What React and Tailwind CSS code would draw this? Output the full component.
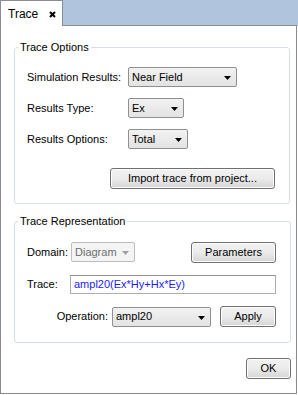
import React from "react";

function Arrow({ disabled }) {
  return (
    <svg width="7" height="4" viewBox="0 0 7 4" className="mt-[2px] shrink-0">
      <path d="M0 0 L7 0 L3.5 4 Z" fill={disabled ? "#a0a0a0" : "#000"} />
    </svg>
  );
}

function Combo({ className, text, disabled }) {
  return (
    <div
      className={
        "flex h-[20px] items-center justify-between rounded-[2px] border pl-[3px] pr-[5px] " +
        (disabled
          ? "border-[#b9bdc0] bg-[#f4f4f4] text-[#6d6d6d] "
          : "border-[#8e8f8f] bg-gradient-to-b from-[#f2f2f2] to-[#e3e3e3] text-black ") +
        className
      }
    >
      <span className="leading-[13px]">{text}</span>
      <Arrow disabled={disabled} />
    </div>
  );
}

function Button({ className, children }) {
  return (
    <div
      className={
        "flex h-[21px] items-center justify-center rounded-[3px] border border-[#707070] bg-gradient-to-b from-[#f2f2f2] via-[#ebebeb] to-[#d5d5d5] text-black shadow-[inset_0_0_0_1px_#fcfcfc] " +
        className
      }
    >
      <span className="leading-[13px]">{children}</span>
    </div>
  );
}

export default function App() {
  return (
    <div className="h-[395px] w-[298px] bg-white font-['Liberation_Sans',Arial,sans-serif] text-[11px] text-black">
      {/* tab bar */}
      <div className="flex h-[26px] w-[298px] bg-[#b0c4de]">
        <div className="flex h-[26px] w-[63px] items-center border-l border-r border-t border-[#898c95] bg-white pl-[7px]">
          <span className="text-[12px] leading-[14px]">Trace</span>
          <svg width="7" height="7" viewBox="0 0 7 7" className="ml-[11px] mt-[1px]">
            <path d="M1 1 L6 6 M6 1 L1 6" stroke="#000" strokeWidth="2" />
          </svg>
        </div>
        <div className="h-[26px] w-[234px] border-b border-[#898c95]" />
      </div>

      {/* panel */}
      <div className="flex h-[368px] w-[297px] flex-col border-b border-l border-r border-[#898c95]">
        <fieldset className="ml-[13px] mt-[15px] w-[276px] rounded-[3px] border border-[#d5dfe5]">
          <legend className="ml-[3px] px-[2px] leading-[13px]">Trace Options</legend>
          <div className="flex flex-col pb-[14px] pl-[12px] pr-[14px] pt-[13px]">
            <div className="flex items-center">
              <span className="w-[101px] leading-[13px]">Simulation Results:</span>
              <Combo className="w-[109px]" text="Near Field" />
            </div>
            <div className="mt-[11px] flex items-center">
              <span className="w-[101px] leading-[13px]">Results Type:</span>
              <Combo className="w-[56px]" text="Ex" />
            </div>
            <div className="mt-[11px] flex items-center">
              <span className="w-[101px] leading-[13px]">Results Options:</span>
              <Combo className="w-[60px]" text="Total" />
            </div>
            <div className="mt-[19px] flex justify-end">
              <Button className="w-[165px]">Import trace from project...</Button>
            </div>
          </div>
        </fieldset>

        <fieldset className="ml-[13px] mt-[11px] w-[276px] rounded-[3px] border border-[#d5dfe5]">
          <legend className="ml-[3px] px-[2px] leading-[13px]">Trace Representation</legend>
          <div className="flex flex-col pb-[15px] pl-[12px] pr-[14px] pt-[14px]">
            <div className="flex items-start">
              <span className="mt-[4px] w-[44px] leading-[13px]">Domain:</span>
              <Combo className="w-[64px]" text="Diagram" disabled />
              <Button className="ml-auto w-[85px]">Parameters</Button>
            </div>
            <div className="mt-[12px] flex items-center">
              <span className="w-[43px] shrink-0 leading-[13px]">Trace:</span>
              <div className="flex h-[19px] w-[206px] shrink-0 items-center border border-[#abadb3] border-t-[#8e9198] bg-white pl-[3px] text-[#1a1aff]">
                <span className="leading-[13px]">ampl20(Ex*Hy+Hx*Ey)</span>
              </div>
            </div>
            <div className="mt-[12px] flex items-center justify-end">
              <span className="mr-[4px] leading-[13px]">Operation:</span>
              <Combo className="w-[99px]" text="ampl20" />
              <Button className="ml-[9px] w-[56px]">Apply</Button>
            </div>
          </div>
        </fieldset>

        <div className="mr-[5px] mt-[15px] flex justify-end">
          <Button className="w-[45px]">OK</Button>
        </div>
      </div>
    </div>
  );
}
